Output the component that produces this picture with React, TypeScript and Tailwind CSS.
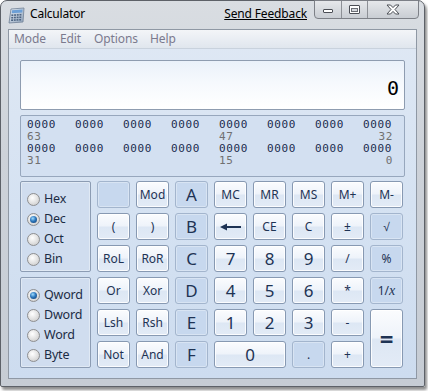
import React from "react";

const UI = "font-['Noto_Sans',sans-serif]";
const MONO = "font-['DejaVu_Sans_Mono',monospace]";

type Btn = {
  label?: React.ReactNode;
  dis?: boolean;
  big?: boolean;
  span?: string;
};

const normalCls =
  "border border-[#8799b2] rounded-[3px] bg-[linear-gradient(to_bottom,#fbfcfe_0%,#eef3fa_48%,#dde7f4_52%,#e3ebf6_100%)] shadow-[inset_0_0_0_1px_rgba(255,255,255,0.85)]";
const disCls =
  "border border-[#a3b5cd] rounded-[3px] bg-[#c7d8ee] shadow-[inset_0_0_0_1px_rgba(255,255,255,0.3)]";

function Arrow() {
  return (
    <svg width="22" height="8" viewBox="0 0 22 8">
      <path d="M0 4 L7 0.5 L7 3 L21 3 L21 5 L7 5 L7 7.5 Z" fill="#1e3354" />
    </svg>
  );
}

function Key({ b }: { b: Btn }) {
  return (
    <div
      className={`${b.dis ? disCls : normalCls} ${b.span ?? ""} flex items-center justify-center text-[#1e3354] ${UI} ${
        b.big ? "text-[17px]" : "text-[12px]"
      } leading-none`}
    >
      {b.label}
    </div>
  );
}

function Radio({ label, on }: { label: string; on?: boolean }) {
  return (
    <div className="flex items-center h-[20px]">
      <div className="w-[13px] h-[13px] rounded-full border border-[#8e8f91] bg-[radial-gradient(circle_at_40%_35%,#ffffff_0%,#e6e6e6_45%,#c4c4c4_100%)] flex items-center justify-center">
        {on && (
          <div className="w-[7px] h-[7px] rounded-full bg-[radial-gradient(circle_at_40%_35%,#9fdcff_0%,#2e78bd_45%,#0c356a_100%)]" />
        )}
      </div>
      <span className={`ml-[4px] text-[12.5px] tracking-[-0.2px] text-[#1c2c44] ${UI} leading-none`}>{label}</span>
    </div>
  );
}

function RadioGroup({ items, on }: { items: string[]; on: number }) {
  return (
    <div className="row-span-3 border border-[#8c9cb3] rounded-[2px] bg-[#d0ddef] shadow-[inset_0_0_0_1px_rgba(255,255,255,0.35)] pl-[6px] pt-[7px]">
      {items.map((it, i) => (
        <Radio key={it} label={it} on={i === on} />
      ))}
    </div>
  );
}

function CalcIcon() {
  return (
    <svg width="18" height="17" viewBox="0 0 18 17">
      <defs>
        <linearGradient id="ci" x1="0" y1="0" x2="1" y2="1">
          <stop offset="0" stopColor="#e8eef5" />
          <stop offset="1" stopColor="#8fa3bb" />
        </linearGradient>
      </defs>
      <path d="M3 2 L16 1 L15 15 L1 16 Z" fill="url(#ci)" stroke="#6f7f94" strokeWidth="0.8" />
      <path d="M4 3.2 L14.6 2.5 L14.3 5.6 L3.7 6.3 Z" fill="#6c9fd6" />
      {[0, 1, 2].map((r) =>
        [0, 1, 2, 3].map((c) => (
          <rect
            key={`${r}-${c}`}
            x={3.4 + c * 2.7 - r * 0.15}
            y={7.4 + r * 2.5 - c * 0.15}
            width="1.9"
            height="1.6"
            fill="#4d6482"
          />
        ))
      )}
    </svg>
  );
}

export default function App() {
  const rows: Btn[][] = [
    [
      { dis: true },
      { label: "Mod" },
      { label: "A", dis: true, big: true },
      { label: "MC" },
      { label: "MR" },
      { label: "MS" },
      { label: "M+" },
      { label: "M-" },
    ],
    [
      { label: "(" },
      { label: ")" },
      { label: "B", dis: true, big: true },
      { label: <Arrow /> },
      { label: "CE" },
      { label: "C" },
      { label: "±" },
      { label: "√", dis: true },
    ],
    [
      { label: "RoL" },
      { label: "RoR" },
      { label: "C", dis: true, big: true },
      { label: "7", big: true },
      { label: "8", big: true },
      { label: "9", big: true },
      { label: "/" },
      { label: "%", dis: true },
    ],
    [
      { label: "Or" },
      { label: "Xor" },
      { label: "D", dis: true, big: true },
      { label: "4", big: true },
      { label: "5", big: true },
      { label: "6", big: true },
      { label: "*" },
      {
        label: (
          <span>
            1/<span className="italic font-['Liberation_Serif',serif] text-[14px]">x</span>
          </span>
        ),
        dis: true,
      },
    ],
    [
      { label: "Lsh" },
      { label: "Rsh" },
      { label: "E", dis: true, big: true },
      { label: "1", big: true },
      { label: "2", big: true },
      { label: "3", big: true },
      { label: "-" },
      { label: <span className="text-[24px] font-bold">=</span>, span: "row-span-2" },
    ],
    [
      { label: "Not" },
      { label: "And" },
      { label: "F", dis: true, big: true },
      { label: "0", big: true, span: "col-span-2" },
      { label: ".", dis: true },
      { label: "+" },
    ],
  ];

  const groups = ["0000", "0000", "0000", "0000", "0000", "0000", "0000", "0000"];

  return (
    <div className="w-[428px] h-[391px] bg-white overflow-hidden">
      <div className="w-[425px] h-[387px] rounded-t-[7px] rounded-b-[2px] border border-[#5d6168] bg-[linear-gradient(to_bottom,#d9dde2_0%,#cdd2d9_40%,#c6ccd4_100%)] shadow-[2px_3px_3px_rgba(0,0,0,0.45)] flex flex-col">
        {/* Title bar */}
        <div className="h-[28px] flex items-start pl-[7px] pr-[5px]">
          <div className="mt-[6px]">
            <CalcIcon />
          </div>
          <span className={`ml-[4px] mt-[5px] text-[12px] tracking-[-0.2px] text-black ${UI} leading-[16px]`}>Calculator</span>
          <span className={`ml-auto mr-[7px] mt-[5px] text-[12px] tracking-[-0.15px] text-black underline ${UI} leading-[16px]`}>
            Send Feedback
          </span>
          <div className="flex h-[19px] -mt-[1px] border border-[#7d8087] rounded-b-[4px] overflow-hidden bg-[linear-gradient(to_bottom,#e6e8eb,#c9cdd3)]">
            <div className="w-[27px] flex items-center justify-center border-r border-[#8d9096]">
              <div className="w-[10px] h-[4px] mt-[3px] bg-white border border-[#4b4e55] rounded-[1px]" />
            </div>
            <div className="w-[26px] flex items-center justify-center border-r border-[#8d9096]">
              <div className="w-[11px] h-[9px] border border-[#4b4e55] bg-white rounded-[1px] flex items-center justify-center">
                <div className="w-[7px] h-[4px] mt-[1px] border border-[#6b6e75] bg-[#d5d8dd]" />
              </div>
            </div>
            <div className="w-[50px] flex items-center justify-center">
              <svg width="14" height="11" viewBox="0 0 14 11">
                <path
                  d="M1 1 L4.5 1 L7 3.6 L9.5 1 L13 1 L9 5.5 L13 10 L9.5 10 L7 7.4 L4.5 10 L1 10 L5 5.5 Z"
                  fill="#ffffff"
                  stroke="#4b4e55"
                  strokeWidth="1"
                  strokeLinejoin="round"
                />
              </svg>
            </div>
          </div>
        </div>

        {/* Client */}
        <div className="mx-[7px] h-[350px] border border-[#8f98a4] bg-[linear-gradient(to_bottom,#dfe8f4_0%,#d5e2f2_50%,#cddcef_100%)] flex flex-col">
          <div className={`h-[19px] border-b border-[#c9d2dd] bg-[linear-gradient(to_bottom,#f3f5f8,#e0e6ee)] flex items-center pl-[5px] text-[12px] tracking-[-0.1px] text-[#7b7a8e] ${UI} leading-none`}>
            <span className="w-[46px]">Mode</span>
            <span className="w-[34px]">Edit</span>
            <span className="w-[56px]">Options</span>
            <span>Help</span>
          </div>

          <div className="pl-[11px] pt-[11px] flex flex-col">
            {/* Display */}
            <div className="w-[385px] h-[50px] border border-[#8e9cb0] rounded-[2px] bg-[linear-gradient(to_bottom,#eaf1fa_0%,#f6f9fd_45%,#ffffff_100%)] flex items-center justify-end pr-[5px]">
              <span className={`${MONO} text-[20px] text-black leading-none mt-[6px]`}>0</span>
            </div>

            {/* Binary */}
            <div className="mt-[5px] w-[385px] h-[62px] border border-[#97a7bd] rounded-[2px] bg-[#d3e0f1] pl-[6px] pt-[3px]">
              {[
                ["63", "47", "32"],
                ["31", "15", "0"],
              ].map((lbl, r) => (
                <div key={r}>
                  <div className={`flex ${MONO} text-[11px] tracking-[0.6px] leading-[12px] text-[#1b2c4e]`}>
                    {groups.map((g, i) => (
                      <span key={i} className="w-[48px] shrink-0">
                        {g}
                      </span>
                    ))}
                  </div>
                  <div className={`flex ${MONO} text-[11px] tracking-[0.6px] leading-[12px] text-[#707070] w-[366px]`}>
                    <span className="w-[192px]">{lbl[0]}</span>
                    <span>{lbl[1]}</span>
                    <span className="ml-auto">{lbl[2]}</span>
                  </div>
                </div>
              ))}
            </div>

            {/* Keypad */}
            <div className="mt-[4px] grid grid-cols-[71px_repeat(8,33px)] auto-rows-[27px] gap-x-[6px] gap-y-[5px]">
              <RadioGroup items={["Hex", "Dec", "Oct", "Bin"]} on={1} />
              {rows.slice(0, 3).flat().map((b, i) => (
                <Key key={`a${i}`} b={b} />
              ))}
              <RadioGroup items={["Qword", "Dword", "Word", "Byte"]} on={0} />
              {rows.slice(3).flat().map((b, i) => (
                <Key key={`b${i}`} b={b} />
              ))}
            </div>
          </div>
        </div>
      </div>
    </div>
  );
}
